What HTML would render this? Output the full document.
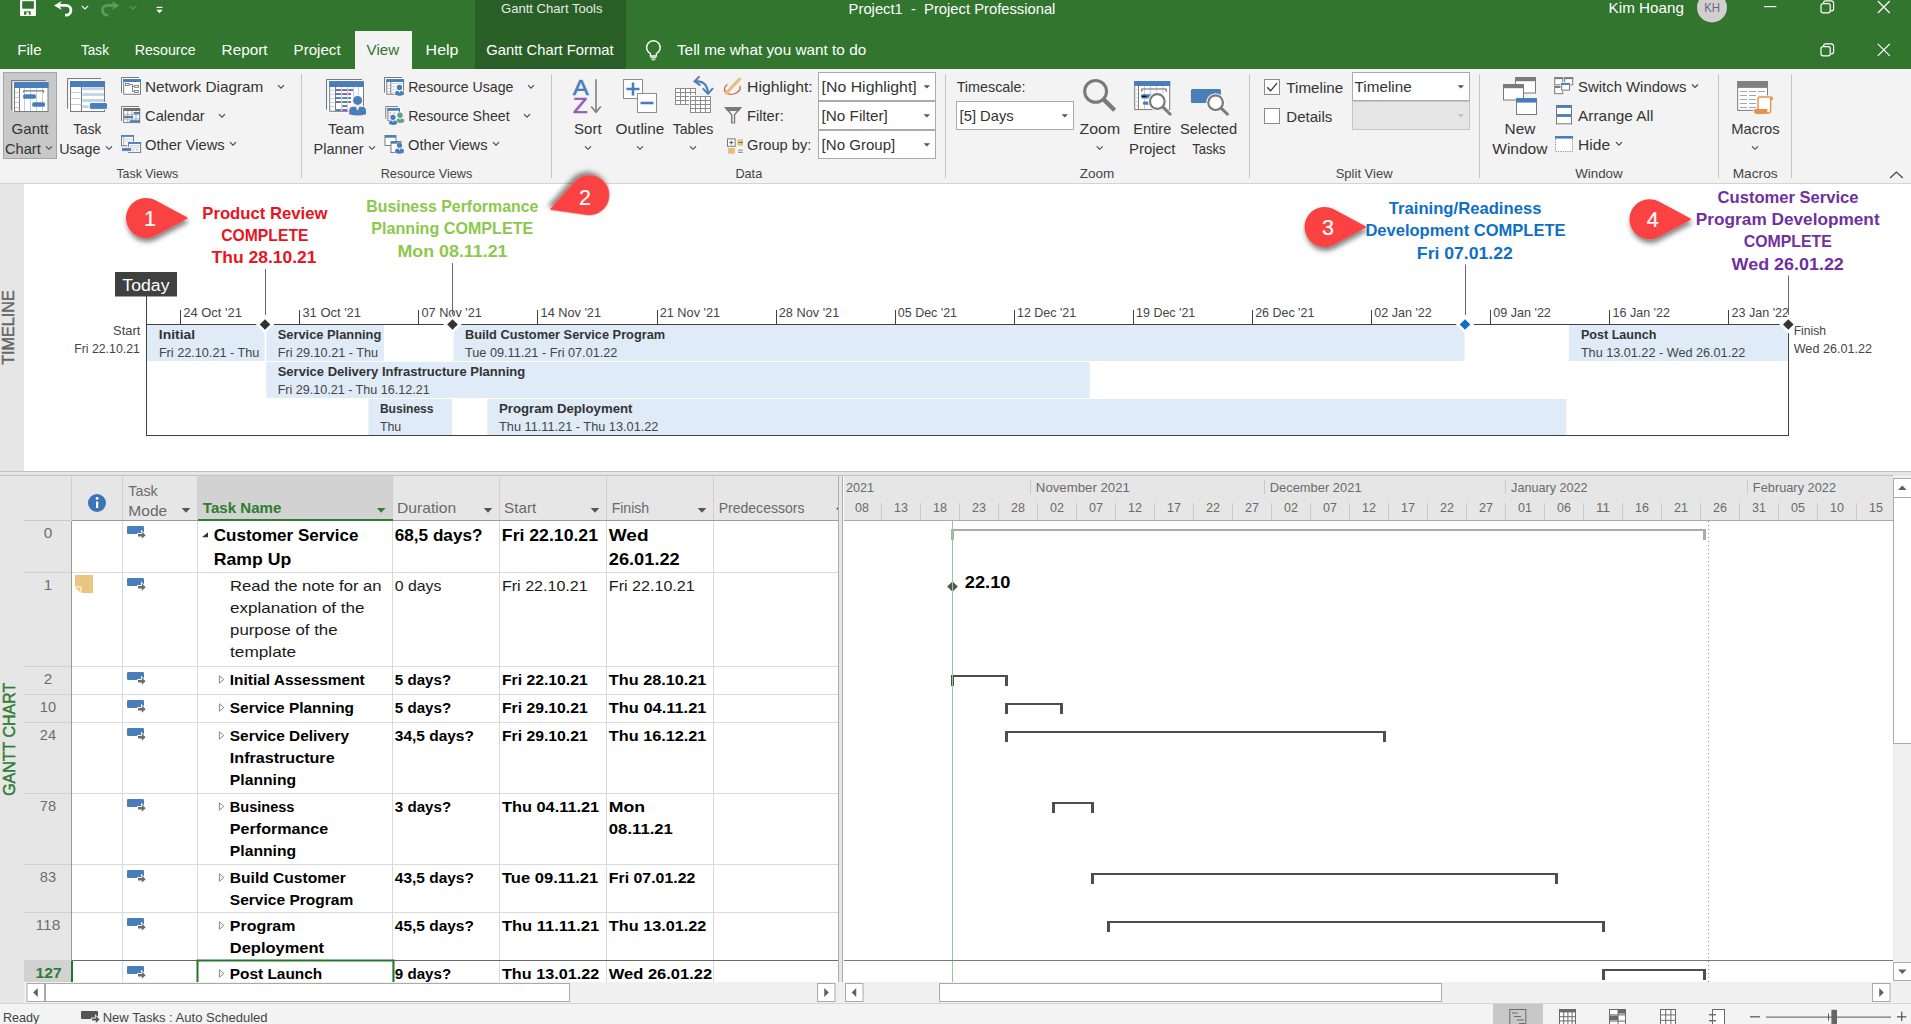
<!DOCTYPE html>
<html lang="en">
<head>
<meta charset="utf-8">
<title>Project1 - Project Professional</title>
<style>
html,body{margin:0;padding:0;background:#fff;}
body{width:1911px;height:1024px;overflow:hidden;font-family:"Liberation Sans",sans-serif;}
#app{position:relative;width:1911px;height:1024px;overflow:hidden;background:#fff;}
#app svg{position:absolute;left:0;top:0;display:block;font-family:"Liberation Sans",sans-serif;}
text{white-space:pre;}
</style>
</head>
<body>
<div id="app">
<svg width="1911" height="1024" viewBox="0 0 1911 1024">
<defs>
<filter id="ds" x="-30%" y="-30%" width="170%" height="180%"><feDropShadow dx="1" dy="3.6" stdDeviation="2.8" flood-color="#000" flood-opacity="0.5"/></filter>
</defs>

<g id="titlebar">
<rect x="0" y="0" width="1911" height="69" fill="#31752F"/>
<rect x="475" y="0" width="151" height="69" fill="#295E27"/>
<rect x="355" y="31" width="57" height="38" fill="#F3F3F3"/>
<rect x="20.1" y="-1" width="15.8" height="17" fill="#FFFFFF" rx="0.8"/>
<rect x="22.2" y="1.2" width="11.7" height="7.5" fill="#31752F"/>
<rect x="24.1" y="11.3" width="6.6" height="3.5" fill="#31752F"/>
<rect x="26.3" y="12.3" width="2.5" height="3.7" fill="#FFFFFF"/>
<path d="M54 5.4 L61.8 1 L59.2 5.4 L61.8 9.9 Z" fill="#FFFFFF"/>
<path d="M58.5 5.4 H66 A4.9 4.9 0 0 1 66 15.2 H65" fill="none" stroke="#FFFFFF" stroke-width="2.8"/>
<path d="M81.8 5.9 l3.2 3 l3.2 -3" fill="none" stroke="#FFFFFF" stroke-width="1.2"/>
<path d="M119.4 5.4 L111.6 1 L114.2 5.4 L111.6 9.9 Z" fill="#5F9C5C"/>
<path d="M114.9 5.4 H107.4 A4.9 4.9 0 0 0 107.4 15.2 H108.4" fill="none" stroke="#5F9C5C" stroke-width="2.8"/>
<path d="M129.8 5.9 l3.2 3 l3.2 -3" fill="none" stroke="#5F9C5C" stroke-width="1.2"/>
<rect x="156.6" y="6.8" width="5.8" height="1.2" fill="#FFFFFF"/>
<path d="M156.3 9.8 h6.4 l-3.2 3.4 z" fill="#FFFFFF"/>
<text x="500.98" y="12.7" font-size="13" fill="#E4EEE3" textLength="101.47" lengthAdjust="spacingAndGlyphs">Gantt Chart Tools</text>
<text x="848.64" y="14" font-size="14.4" fill="#FFFFFF" textLength="206.78" lengthAdjust="spacingAndGlyphs">Project1  -  Project Professional</text>
<text x="1608.64" y="12.6" font-size="14.4" fill="#FFFFFF" textLength="75.28" lengthAdjust="spacingAndGlyphs">Kim Hoang</text>
<circle cx="1712" cy="7.5" r="15" fill="#D2D0CE"/>
<text x="1704.19" y="11.8" font-size="12.5" fill="#6E6480" textLength="15.84" lengthAdjust="spacingAndGlyphs">KH</text>
<rect x="1764" y="6" width="12.4" height="1.2" fill="#FFFFFF"/>
<rect x="1821" y="3.6" width="9.2" height="9.2" fill="none" stroke="#FFFFFF" stroke-width="1.2" rx="2"/>
<path d="M1823.6 3.6 v-0.8 a2 2 0 0 1 2 -2 h5.6 a2.4 2.4 0 0 1 2.4 2.4 v5.6 a2 2 0 0 1 -2 2 h-0.8" fill="none" stroke="#FFFFFF" stroke-width="1.2"/>
<rect x="1821" y="46.6" width="9.2" height="9.2" fill="none" stroke="#FFFFFF" stroke-width="1.2" rx="2"/>
<path d="M1823.6 46.6 v-0.8 a2 2 0 0 1 2 -2 h5.6 a2.4 2.4 0 0 1 2.4 2.4 v5.6 a2 2 0 0 1 -2 2 h-0.8" fill="none" stroke="#FFFFFF" stroke-width="1.2"/>
<path d="M1877.8 1 l12 12 M1889.8 1 l-12 12" fill="none" stroke="#FFFFFF" stroke-width="1.2"/>
<path d="M1877.8 43.8 l12 12 M1889.8 43.8 l-12 12" fill="none" stroke="#FFFFFF" stroke-width="1.2"/>
<text x="17.34" y="54.8" font-size="14.4" fill="#FFFFFF" textLength="24.28" lengthAdjust="spacingAndGlyphs">File</text>
<text x="81.04" y="54.8" font-size="14.4" fill="#FFFFFF" textLength="27.88" lengthAdjust="spacingAndGlyphs">Task</text>
<text x="134.64" y="54.8" font-size="14.4" fill="#FFFFFF" textLength="60.98" lengthAdjust="spacingAndGlyphs">Resource</text>
<text x="221.64" y="54.8" font-size="14.4" fill="#FFFFFF" textLength="45.98" lengthAdjust="spacingAndGlyphs">Report</text>
<text x="293.64" y="54.8" font-size="14.4" fill="#FFFFFF" textLength="46.98" lengthAdjust="spacingAndGlyphs">Project</text>
<text x="366.64" y="54.8" font-size="14.4" fill="#31752F" textLength="32.58" lengthAdjust="spacingAndGlyphs">View</text>
<text x="425.64" y="54.8" font-size="14.4" fill="#FFFFFF" textLength="32.88" lengthAdjust="spacingAndGlyphs">Help</text>
<text x="486.24" y="54.8" font-size="14.4" fill="#FFFFFF" textLength="127.38" lengthAdjust="spacingAndGlyphs">Gantt Chart Format</text>
<path d="M650.4 53.6 A6.8 6.8 0 1 1 656.4 53.6 V56 H650.4 Z" fill="none" stroke="#FFFFFF" stroke-width="1.4"/>
<rect x="650.6" y="57.2" width="5.6" height="1.2" fill="#FFFFFF"/>
<rect x="651.6" y="59.2" width="3.6" height="1.1" fill="#FFFFFF"/>
<text x="676.94" y="54.8" font-size="14.4" fill="#FFFFFF" textLength="189.28" lengthAdjust="spacingAndGlyphs">Tell me what you want to do</text>
</g>
<g id="ribbon">
<rect x="0" y="69" width="1911" height="114" fill="#F3F3F3"/>
<rect x="0" y="183" width="1911" height="1" fill="#D4D4D4"/>
<rect x="3.5" y="72.5" width="53" height="86" fill="#C8C8C8" stroke="#A6A6A6" stroke-width="1"/>
<g transform="translate(0 0)">
<path d="M11.5 110 V80.5 H46" fill="none" stroke="#7A7A7A" stroke-width="1"/>
<rect x="13" y="81.6" width="35" height="30.2" fill="#fff"/>
<rect x="14.5" y="82.5" width="33.5" height="29" fill="#fff" stroke="#7A7A7A" stroke-width="1"/>
<rect x="14" y="82" width="34.5" height="6" fill="#4A7EBB"/>
<rect x="19" y="88" width="1" height="23" fill="#7A7A7A"/>
<rect x="24" y="88" width="1" height="23" fill="#BDD0E9"/>
<rect x="30" y="88" width="1" height="23" fill="#BDD0E9"/>
<rect x="36" y="88" width="1" height="23" fill="#BDD0E9"/>
<rect x="42" y="88" width="1" height="23" fill="#BDD0E9"/>
<rect x="15" y="92" width="4" height="1" fill="#BDD0E9"/>
<rect x="15" y="97" width="4" height="1" fill="#BDD0E9"/>
<rect x="15" y="102" width="4" height="1" fill="#BDD0E9"/>
<rect x="15" y="107" width="4" height="1" fill="#BDD0E9"/>
<path d="M23.7 92.8 V90.9 H43.6 V92.8" fill="none" stroke="#7A7A7A" stroke-width="1.1"/>
<rect x="23.1" y="94.2" width="12.8" height="4.6" fill="#4A7EBB" rx="1.6"/>
<rect x="32.2" y="102.2" width="12.8" height="4.6" fill="#4A7EBB" rx="1.6"/>
</g>
<text x="11.64" y="134" font-size="14.4" fill="#333333" textLength="36.78" lengthAdjust="spacingAndGlyphs">Gantt</text>
<text x="5.04" y="154" font-size="14.4" fill="#333333" textLength="35.68" lengthAdjust="spacingAndGlyphs">Chart</text>
<path d="M46 146.3 l3 3 l3 -3" fill="none" stroke="#444" stroke-width="1.1"/>
<g transform="translate(0 0)">
<path d="M67.5 108.6 V78.5 H101" fill="none" stroke="#7A7A7A" stroke-width="1"/>
<rect x="69" y="80" width="36" height="32" fill="#fff"/>
<rect x="70.5" y="81.5" width="34" height="30" fill="#fff" stroke="#7A7A7A" stroke-width="1"/>
<rect x="70" y="81" width="35" height="6" fill="#4A7EBB"/>
<rect x="81" y="87" width="1" height="24" fill="#7A7A7A"/>
<rect x="71" y="92" width="10" height="1" fill="#BDD0E9"/>
<rect x="71" y="98" width="10" height="1" fill="#BDD0E9"/>
<rect x="71" y="104" width="10" height="1" fill="#BDD0E9"/>
<rect x="82.3" y="87.3" width="21.7" height="2.9" fill="#C3D4E9"/>
<rect x="82.3" y="93.1" width="21.7" height="2.9" fill="#C3D4E9"/>
<rect x="82.3" y="99" width="21.7" height="2.9" fill="#C3D4E9"/>
<rect x="82.3" y="105.2" width="6.6" height="2.8" fill="#C3D4E9"/>
<rect x="89.4" y="102.5" width="18.2" height="6.9" fill="#4A7EBB" stroke="#fff" stroke-width="1" rx="2"/>
</g>
<text x="73.34" y="134" font-size="14.4" fill="#333333" textLength="27.88" lengthAdjust="spacingAndGlyphs">Task</text>
<text x="59.14" y="154" font-size="14.4" fill="#333333" textLength="41.28" lengthAdjust="spacingAndGlyphs">Usage</text>
<path d="M106 146.3 l3 3 l3 -3" fill="none" stroke="#444" stroke-width="1.1"/>
<g transform="translate(0 0)">
<path d="M121.5 92.9 V77.5 H139" fill="none" stroke="#7A7A7A" stroke-width="1"/>
<rect x="122.6" y="78.5" width="19" height="17" fill="#fff"/>
<rect x="123.7" y="79.6" width="16.8" height="14.7" fill="#fff" stroke="#7A7A7A" stroke-width="1"/>
<rect x="123.2" y="79.1" width="17.8" height="2.9" fill="#4A7EBB"/>
<rect x="125.5" y="83.5" width="3.6" height="2" fill="#fff" stroke="#7A7A7A" stroke-width="0.9"/>
<rect x="134.6" y="85.4" width="3.8" height="2" fill="#fff" stroke="#7A7A7A" stroke-width="0.9"/>
<rect x="134.6" y="90.5" width="3.8" height="2" fill="#fff" stroke="#7A7A7A" stroke-width="0.9"/>
<path d="M129.4 84.5 H132.5 V91.5 H134.3 M132.5 86.4 H134.3" fill="none" stroke="#7A7A7A" stroke-width="0.9"/>
</g>
<text x="145.04" y="92" font-size="14.4" fill="#333333" textLength="118.28" lengthAdjust="spacingAndGlyphs">Network Diagram</text>
<path d="M278 85.1 l3 3 l3 -3" fill="none" stroke="#444" stroke-width="1.1"/>
<g transform="translate(0 0)">
<path d="M121.5 121 V106.5 H139" fill="none" stroke="#7A7A7A" stroke-width="1"/>
<rect x="122.6" y="107.5" width="18.2" height="16" fill="#fff"/>
<rect x="123.7" y="108.6" width="16" height="14" fill="#fff" stroke="#7A7A7A" stroke-width="1"/>
<rect x="123.2" y="108.1" width="17" height="2.9" fill="#707070"/>
<rect x="127.4" y="111" width="0.8" height="11.4" fill="#9A9A9A"/>
<rect x="131.5" y="111" width="0.8" height="11.4" fill="#9A9A9A"/>
<rect x="135.6" y="111" width="0.8" height="11.4" fill="#9A9A9A"/>
<rect x="124" y="114.4" width="15.6" height="0.8" fill="#9A9A9A"/>
<rect x="124" y="118.6" width="15.6" height="0.8" fill="#9A9A9A"/>
<rect x="133.7" y="112" width="6.4" height="2" fill="#4A7EBB"/>
<rect x="123.8" y="116" width="9.4" height="2" fill="#4A7EBB"/>
<rect x="129.6" y="120.2" width="10.5" height="2" fill="#4A7EBB"/>
</g>
<text x="145.04" y="121" font-size="14.4" fill="#333333" textLength="59.68" lengthAdjust="spacingAndGlyphs">Calendar</text>
<path d="M219 114.1 l3 3 l3 -3" fill="none" stroke="#444" stroke-width="1.1"/>
<g transform="translate(0 0)">
<rect x="121.5" y="135.7" width="12" height="10" fill="#fff" stroke="#7A7A7A" stroke-width="1"/>
<rect x="121" y="135.2" width="13" height="1.6" fill="#4A7EBB"/>
<rect x="123.4" y="137" width="0.8" height="8" fill="#9A9A9A"/>
<rect x="125" y="138.6" width="7.6" height="1" fill="#BDD0E9"/>
<rect x="125" y="140.8" width="7.6" height="1" fill="#BDD0E9"/>
<rect x="127.4" y="141.4" width="14.4" height="12" fill="#F3F3F3"/>
<rect x="128.6" y="142.6" width="12" height="9.8" fill="#fff" stroke="#7A7A7A" stroke-width="1"/>
<rect x="128.1" y="142.1" width="13" height="1.8" fill="#4A7EBB"/>
<rect x="130.6" y="145.4" width="8" height="2" fill="none" stroke="#BDD0E9" stroke-width="0.9"/>
<rect x="132" y="149" width="2.6" height="1.6" fill="#BDD0E9"/>
<rect x="136" y="149" width="2.6" height="1.6" fill="#BDD0E9"/>
<rect x="121.4" y="147.6" width="10.2" height="3.8" fill="#4A7EBB" stroke="#F3F3F3" stroke-width="1" rx="1.4"/>
</g>
<text x="145.04" y="150" font-size="14.4" fill="#333333" textLength="79.68" lengthAdjust="spacingAndGlyphs">Other Views</text>
<path d="M230 142.1 l3 3 l3 -3" fill="none" stroke="#444" stroke-width="1.1"/>
<text x="116.39" y="177.7" font-size="12.6" fill="#444" textLength="61.74" lengthAdjust="spacingAndGlyphs">Task Views</text>
<rect x="301" y="74" width="1" height="104" fill="#C6C6C6"/>
<g transform="translate(0 0)">
<path d="M326.5 109.7 V79.5 H362" fill="none" stroke="#7A7A7A" stroke-width="1"/>
<rect x="328.4" y="80.4" width="36" height="32" fill="#fff"/>
<rect x="329.7" y="81.7" width="33.8" height="29.6" fill="#fff" stroke="#7A7A7A" stroke-width="1"/>
<rect x="329.2" y="81.2" width="34.8" height="5.8" fill="#4A7EBB"/>
<rect x="335" y="87" width="1" height="24" fill="#7A7A7A"/>
<rect x="341" y="87" width="1" height="24" fill="#BDD0E9"/>
<rect x="347" y="87" width="1" height="24" fill="#BDD0E9"/>
<rect x="353" y="87" width="1" height="10" fill="#BDD0E9"/>
<rect x="358" y="87" width="1" height="7.5" fill="#BDD0E9"/>
<rect x="330.5" y="89.8" width="4.1" height="1" fill="#BDD0E9"/>
<rect x="330.5" y="93.9" width="4.1" height="1" fill="#BDD0E9"/>
<rect x="330.5" y="98" width="4.1" height="1" fill="#BDD0E9"/>
<rect x="330.5" y="102" width="4.1" height="1" fill="#BDD0E9"/>
<rect x="330.5" y="106" width="4.1" height="1" fill="#BDD0E9"/>
<rect x="336" y="89.1" width="4.9" height="1.9" fill="#9150B5"/>
<rect x="342.2" y="89.1" width="4.8" height="1.9" fill="#707070"/>
<rect x="348.2" y="89.1" width="4.9" height="1.9" fill="#4A7EBB"/>
<rect x="336" y="93.1" width="4.9" height="1.9" fill="#4A7EBB"/>
<rect x="342.2" y="93.1" width="4.8" height="1.9" fill="#9150B5"/>
<rect x="348.2" y="93.1" width="2.8" height="1.9" fill="#9150B5"/>
<rect x="336" y="97.1" width="4.9" height="1.9" fill="#4A7EBB"/>
<rect x="342.2" y="97.1" width="4.8" height="1.9" fill="#4A7EBB"/>
<rect x="348.2" y="97.1" width="2.8" height="1.9" fill="#4A7EBB"/>
<rect x="336" y="101.1" width="4.9" height="1.9" fill="#707070"/>
<rect x="342.2" y="101.1" width="4.8" height="1.9" fill="#707070"/>
<rect x="348.2" y="101.1" width="2.8" height="1.9" fill="#707070"/>
<rect x="342.2" y="105.1" width="4.8" height="1.9" fill="#4A7EBB"/>
<rect x="336" y="109.1" width="4.9" height="1.9" fill="#4A7EBB"/>
<rect x="342.2" y="109.1" width="4.8" height="1.9" fill="#9150B5"/>
<path d="M349.2 114.2 L349.2 111 Q349.2 106.8 353.4 106.8 L361.8 106.8 Q366 106.8 366 111 L366 114.2 Q357.6 116.6 349.2 114.2 Z" fill="#4A7EBB" stroke="#F3F3F3" stroke-width="1.8" paint-order="stroke"/>
<circle cx="357.6" cy="100.4" r="4.5" fill="#4A7EBB" stroke="#F3F3F3" stroke-width="1.8" paint-order="stroke"/>
<path d="M355.58 106.6 h4.03 l-2.02 4.03 z" fill="#F3F3F3"/>
</g>
<text x="328.14" y="134" font-size="14.4" fill="#333333" textLength="36.18" lengthAdjust="spacingAndGlyphs">Team</text>
<text x="313.64" y="154" font-size="14.4" fill="#333333" textLength="49.88" lengthAdjust="spacingAndGlyphs">Planner</text>
<path d="M369 146.3 l3 3 l3 -3" fill="none" stroke="#444" stroke-width="1.1"/>
<g transform="translate(0 0)">
<path d="M384.5 92.6 V77.5 H402" fill="none" stroke="#7A7A7A" stroke-width="1"/>
<rect x="385.6" y="78.6" width="19" height="17" fill="#fff"/>
<rect x="386.8" y="79.7" width="16.8" height="14.6" fill="#fff" stroke="#7A7A7A" stroke-width="1"/>
<rect x="386.3" y="79.2" width="17.8" height="2.8" fill="#4A7EBB"/>
<rect x="390.3" y="82" width="1" height="12" fill="#7A7A7A"/>
<rect x="387.3" y="85" width="2.7" height="1" fill="#BDD0E9"/>
<rect x="387.3" y="88" width="2.7" height="1" fill="#BDD0E9"/>
<rect x="387.3" y="91" width="2.7" height="1" fill="#BDD0E9"/>
<rect x="391.5" y="83.2" width="11.5" height="1" fill="#BDD0E9"/>
<rect x="391.5" y="86.2" width="4" height="1" fill="#BDD0E9"/>
<rect x="391.5" y="89.3" width="4" height="1" fill="#BDD0E9"/>
<rect x="391.5" y="92.2" width="2.3" height="1" fill="#BDD0E9"/>
<path d="M395 94.6 L395 93.3 Q395 91 397.3 91 L401.7 91 Q404 91 404 93.3 L404 94.6 Q399.5 97 395 94.6 Z" fill="#4A7EBB" stroke="#F3F3F3" stroke-width="1.2" paint-order="stroke"/>
<circle cx="399.5" cy="87.4" r="2.7" fill="#4A7EBB" stroke="#F3F3F3" stroke-width="1.2" paint-order="stroke"/>
<path d="M398.42 90.8 h2.16 l-1.08 2.16 z" fill="#F3F3F3"/>
</g>
<text x="408.14" y="92" font-size="14.4" fill="#333333" textLength="105.28" lengthAdjust="spacingAndGlyphs">Resource Usage</text>
<path d="M528 85.1 l3 3 l3 -3" fill="none" stroke="#444" stroke-width="1.1"/>
<g transform="translate(0 0)">
<path d="M385.8 118.7 V106.6 H398" fill="none" stroke="#7A7A7A" stroke-width="1"/>
<rect x="386.8" y="107.6" width="14" height="14" fill="#fff"/>
<rect x="387.9" y="108.7" width="11.6" height="12" fill="#fff" stroke="#7A7A7A" stroke-width="1"/>
<rect x="387.4" y="108.2" width="12.6" height="2.6" fill="#4A7EBB"/>
<rect x="389.7" y="112.5" width="1" height="1" fill="#555"/>
<rect x="393.6" y="112.5" width="1" height="1" fill="#555"/>
<rect x="397.6" y="112.5" width="1" height="1" fill="#555"/>
<rect x="389.7" y="115.3" width="1" height="1" fill="#555"/>
<rect x="389.7" y="118.2" width="1" height="1" fill="#555"/>
<path d="M396.4 121.8 L396.4 120.8 Q396.4 118.6 398.6 118.6 L402 118.6 Q404.2 118.6 404.2 120.8 L404.2 121.8 Q400.3 124.2 396.4 121.8 Z" fill="#5FA08A" stroke="#F3F3F3" stroke-width="1.2" paint-order="stroke"/>
<circle cx="400" cy="115.2" r="2.7" fill="#5FA08A" stroke="#F3F3F3" stroke-width="1.2" paint-order="stroke"/>
<path d="M399.06 118.4 h1.87 l-0.94 1.87 z" fill="#F3F3F3"/>
<path d="M389 123.8 L389 122.8 Q389 120.6 391.2 120.6 L395 120.6 Q397.2 120.6 397.2 122.8 L397.2 123.8 Q393.1 126.2 389 123.8 Z" fill="#4A7EBB" stroke="#F3F3F3" stroke-width="1.2" paint-order="stroke"/>
<circle cx="393" cy="117.3" r="2.6" fill="#4A7EBB" stroke="#F3F3F3" stroke-width="1.2" paint-order="stroke"/>
<path d="M392.02 120.4 h1.97 l-0.98 1.97 z" fill="#F3F3F3"/>
</g>
<text x="408.14" y="121" font-size="14.4" fill="#333333" textLength="101.48" lengthAdjust="spacingAndGlyphs">Resource Sheet</text>
<path d="M524 114.1 l3 3 l3 -3" fill="none" stroke="#444" stroke-width="1.1"/>
<rect x="385" y="135.5" width="11" height="10" fill="#fff" stroke="#7E7E7E" stroke-width="1"/>
<rect x="385" y="135.5" width="11" height="2.2" fill="#4A7EBB"/>
<rect x="391" y="141.5" width="10" height="11" fill="#fff" stroke="#7E7E7E" stroke-width="1"/>
<rect x="391" y="141.5" width="10" height="2.2" fill="#4A7EBB"/>
<path d="M395.13 152.47 L395.13 150.72 Q395.13 148.81 397.03 148.81 L401.97 148.81 Q403.87 148.81 403.87 150.72 L403.87 152.47 Q399.5 154.87 395.13 152.47 Z" fill="#4A7EBB" stroke="#F3F3F3" stroke-width="1" paint-order="stroke"/>
<circle cx="399.5" cy="145.3" r="2.56" fill="#4A7EBB" stroke="#F3F3F3" stroke-width="1" paint-order="stroke"/>
<path d="M398.45 148.62 h2.1 l-1.05 2.1 z" fill="#F3F3F3"/>
<text x="408.14" y="150" font-size="14.4" fill="#333333" textLength="79.38" lengthAdjust="spacingAndGlyphs">Other Views</text>
<path d="M493 142.1 l3 3 l3 -3" fill="none" stroke="#444" stroke-width="1.1"/>
<text x="380.69" y="177.7" font-size="12.6" fill="#444" textLength="91.64" lengthAdjust="spacingAndGlyphs">Resource Views</text>
<rect x="551" y="74" width="1" height="104" fill="#C6C6C6"/>
<g transform="translate(0 0)">
<text x="572.86" y="94.7" font-size="21.6" fill="#4A7EBB" textLength="16.02" lengthAdjust="spacingAndGlyphs" stroke="#4A7EBB" stroke-width="0.55">A</text>
<text x="573.06" y="112.8" font-size="21.6" fill="#9B59B6" textLength="14.62" lengthAdjust="spacingAndGlyphs" stroke="#9B59B6" stroke-width="0.55">Z</text>
<path d="M596 79.2 V112 M591.2 106.6 L596 112.2 L600.8 106.6" fill="none" stroke="#808080" stroke-width="1.6"/>
</g>
<text x="574.04" y="134" font-size="14.4" fill="#333333" textLength="27.68" lengthAdjust="spacingAndGlyphs">Sort</text>
<path d="M585 146.3 l3 3 l3 -3" fill="none" stroke="#444" stroke-width="1.1"/>
<rect x="623.5" y="79.5" width="19" height="19" fill="#fff" stroke="#8C8C8C" stroke-width="1"/>
<path d="M626.5 89 h13 M633 82.5 v13" fill="none" stroke="#4A7EBB" stroke-width="2.6"/>
<rect x="637.5" y="93.5" width="19" height="19" fill="#fff" stroke="#8C8C8C" stroke-width="1"/>
<path d="M640.5 103 h13" fill="none" stroke="#4A7EBB" stroke-width="2.6"/>
<text x="615.64" y="134" font-size="14.4" fill="#333333" textLength="48.68" lengthAdjust="spacingAndGlyphs">Outline</text>
<path d="M637 146.3 l3 3 l3 -3" fill="none" stroke="#444" stroke-width="1.1"/>
<g transform="translate(0 0)">
<rect x="675.5" y="88.5" width="20" height="16" fill="#fff" stroke="#8C8C8C" stroke-width="1"/>
<rect x="680" y="88" width="1" height="16" fill="#8C8C8C"/>
<rect x="685" y="88" width="1" height="16" fill="#8C8C8C"/>
<rect x="690" y="88" width="1" height="16" fill="#8C8C8C"/>
<rect x="675" y="92" width="20" height="1" fill="#8C8C8C"/>
<rect x="675" y="96" width="20" height="1" fill="#8C8C8C"/>
<rect x="675" y="100" width="20" height="1" fill="#8C8C8C"/>
<rect x="689" y="95" width="22.5" height="18" fill="#F3F3F3"/>
<rect x="690.5" y="96.5" width="20" height="16" fill="#fff" stroke="#8C8C8C" stroke-width="1"/>
<rect x="695" y="96" width="1" height="16" fill="#8C8C8C"/>
<rect x="700" y="96" width="1" height="16" fill="#8C8C8C"/>
<rect x="705" y="96" width="1" height="16" fill="#8C8C8C"/>
<rect x="690" y="100" width="20" height="1" fill="#8C8C8C"/>
<rect x="690" y="104" width="20" height="1" fill="#8C8C8C"/>
<rect x="690" y="108" width="20" height="1" fill="#8C8C8C"/>
<path d="M695.6 81.4 Q706.6 80.4 708 92.4" fill="none" stroke="#4A7EBB" stroke-width="2"/>
<path d="M699.6 76.4 L694.6 81.4 L700.4 85.4" fill="none" stroke="#4A7EBB" stroke-width="2"/>
<path d="M702.8 88.4 L708 93.8 L713 88.2" fill="none" stroke="#4A7EBB" stroke-width="2"/>
</g>
<text x="672.64" y="134" font-size="14.4" fill="#333333" textLength="40.78" lengthAdjust="spacingAndGlyphs">Tables</text>
<path d="M690 146.3 l3 3 l3 -3" fill="none" stroke="#444" stroke-width="1.1"/>
<g transform="translate(0 0)">
<path d="M727.4 84.6 A8 5.6 -12 1 0 739.8 85.8" fill="none" stroke="#D9553B" stroke-width="1.2"/>
<path d="M726.4 93 L739.6 79.2" fill="none" stroke="#E8BE7C" stroke-width="3.2" stroke-linecap="round"/>
<path d="M725 94.4 l2.6 -0.8 l-1.8 -1.8 z" fill="#E8BE7C"/>
</g>
<text x="747.04" y="92" font-size="14.4" fill="#333333" textLength="65.68" lengthAdjust="spacingAndGlyphs">Highlight:</text>
<g transform="translate(0 0)">
<path d="M724 107 H742.2 L735.2 115 V123.6 H731 V115 Z" fill="#7A7A7A"/>
<path d="M729.4 111 H736.8 L733.8 114.6 V122.4 H732.4 V114.6 Z" fill="#F3F3F3"/>
<path d="M724.6 107 H741.6 L739.6 110.6 H726.6 Z" fill="#7A7A7A"/>
</g>
<text x="747.04" y="121" font-size="14.4" fill="#333333" textLength="36.68" lengthAdjust="spacingAndGlyphs">Filter:</text>
<g transform="translate(0 0)">
<rect x="727.5" y="138.9" width="7.6" height="7.4" fill="#fff" stroke="#7A7A7A" stroke-width="1"/>
<path d="M729.3 142.6 h4 M731.3 140.6 v4" fill="none" stroke="#444" stroke-width="0.9"/>
<rect x="737.4" y="139.4" width="5.6" height="6.2" fill="#E8BE7C"/>
<rect x="738.4" y="142" width="4.6" height="0.9" fill="#666"/>
<rect x="728" y="148" width="6.8" height="5.7" fill="#E8BE7C"/>
<rect x="737" y="148" width="6.4" height="5.7" fill="#fff"/>
<rect x="738" y="149.6" width="5" height="0.9" fill="#666"/>
<rect x="738" y="151.8" width="5" height="0.9" fill="#666"/>
</g>
<text x="747.04" y="150" font-size="14.4" fill="#333333" textLength="64.38" lengthAdjust="spacingAndGlyphs">Group by:</text>
<rect x="818.5" y="72.5" width="117" height="28" fill="#fff" stroke="#ABABAB" stroke-width="1"/>
<path d="M923.6 85.2 h6.4 l-3.2 3.4 z" fill="#555"/>
<text x="821.64" y="92" font-size="14.4" fill="#333333" textLength="95.08" lengthAdjust="spacingAndGlyphs">[No Highlight]</text>
<rect x="818.5" y="101.5" width="117" height="28" fill="#fff" stroke="#ABABAB" stroke-width="1"/>
<path d="M923.6 114.2 h6.4 l-3.2 3.4 z" fill="#555"/>
<text x="821.64" y="121" font-size="14.4" fill="#333333" textLength="66.08" lengthAdjust="spacingAndGlyphs">[No Filter]</text>
<rect x="818.5" y="130.5" width="117" height="28" fill="#fff" stroke="#ABABAB" stroke-width="1"/>
<path d="M923.6 143.2 h6.4 l-3.2 3.4 z" fill="#555"/>
<text x="821.64" y="150" font-size="14.4" fill="#333333" textLength="73.58" lengthAdjust="spacingAndGlyphs">[No Group]</text>
<text x="735.38" y="177.7" font-size="12.6" fill="#444" textLength="26.84" lengthAdjust="spacingAndGlyphs">Data</text>
<rect x="945" y="74" width="1" height="104" fill="#C6C6C6"/>
<text x="956.64" y="92" font-size="14.4" fill="#333333" textLength="68.88" lengthAdjust="spacingAndGlyphs">Timescale:</text>
<rect x="956.5" y="101.5" width="117" height="28" fill="#fff" stroke="#ABABAB" stroke-width="1"/>
<path d="M1061.6 114.2 h6.4 l-3.2 3.4 z" fill="#555"/>
<text x="959.64" y="121" font-size="14.4" fill="#333333" textLength="54.08" lengthAdjust="spacingAndGlyphs">[5] Days</text>
<g transform="translate(0 0)">
<path d="M1103.31 99.11 L1114.6 110.2" fill="none" stroke="#7A7A7A" stroke-width="4.4"/>
<circle cx="1095.6" cy="91.4" r="10.9" fill="#F3F3F3" stroke="#7A7A7A" stroke-width="3.1"/>
</g>
<text x="1079.64" y="134" font-size="14.4" fill="#333333" textLength="40.48" lengthAdjust="spacingAndGlyphs">Zoom</text>
<path d="M1096.7 146.3 l3 3 l3 -3" fill="none" stroke="#444" stroke-width="1.1"/>
<g transform="translate(0 0)">
<rect x="1134.7" y="81.6" width="35" height="28" fill="#fff" stroke="#7A7A7A" stroke-width="1"/>
<rect x="1134.2" y="81.1" width="36" height="4.9" fill="#4A7EBB"/>
<rect x="1138" y="86" width="1" height="23.6" fill="#7A7A7A"/>
<rect x="1144" y="86" width="1" height="23" fill="#BDD0E9"/>
<rect x="1150" y="86" width="1" height="23" fill="#BDD0E9"/>
<rect x="1156" y="86" width="1" height="23" fill="#BDD0E9"/>
<rect x="1162.5" y="86" width="1" height="23" fill="#BDD0E9"/>
<rect x="1135.4" y="89.4" width="2.6" height="1" fill="#BDD0E9"/>
<rect x="1135.4" y="93.4" width="2.6" height="1" fill="#BDD0E9"/>
<rect x="1135.4" y="97.2" width="2.6" height="1" fill="#BDD0E9"/>
<rect x="1135.4" y="101" width="2.6" height="1" fill="#BDD0E9"/>
<rect x="1135.4" y="105" width="2.6" height="1" fill="#BDD0E9"/>
<path d="M1141.8 91.8 V89 H1166.2 V91.8" fill="none" stroke="#666" stroke-width="1.1"/>
<rect x="1141.3" y="94.2" width="11" height="4.3" fill="#4A7EBB" rx="1"/>
<rect x="1141.6" y="95.7" width="5" height="1.4" fill="#111"/>
<rect x="1143" y="101.4" width="8" height="3.4" fill="#4A7EBB" rx="1"/>
<circle cx="1157.3" cy="101.5" r="9.4" fill="#fff"/>
<path d="M1162.46 106.66 L1171 115" fill="none" stroke="#F3F3F3" stroke-width="4.9"/>
<path d="M1162.46 106.66 L1171 115" fill="none" stroke="#7A7A7A" stroke-width="2.9"/>
<circle cx="1157.3" cy="101.5" r="7.3" fill="#fff" stroke="#7A7A7A" stroke-width="2.2"/>
</g>
<text x="1133.34" y="134" font-size="14.4" fill="#333333" textLength="37.88" lengthAdjust="spacingAndGlyphs">Entire</text>
<text x="1129.14" y="154" font-size="14.4" fill="#333333" textLength="46.28" lengthAdjust="spacingAndGlyphs">Project</text>
<g transform="translate(0 0)">
<rect x="1190.9" y="88.9" width="30" height="14.1" fill="#4A7EBB" rx="1.6"/>
<circle cx="1215.6" cy="102.7" r="9.45" fill="#fff"/>
<path d="M1220.8 107.9 L1228.3 115" fill="none" stroke="#F3F3F3" stroke-width="4.9"/>
<path d="M1220.8 107.9 L1228.3 115" fill="none" stroke="#7A7A7A" stroke-width="2.9"/>
<circle cx="1215.6" cy="102.7" r="7.35" fill="#fff" stroke="#7A7A7A" stroke-width="2.2"/>
</g>
<text x="1180.04" y="134" font-size="14.4" fill="#333333" textLength="57.18" lengthAdjust="spacingAndGlyphs">Selected</text>
<text x="1192.24" y="154" font-size="14.4" fill="#333333" textLength="33.28" lengthAdjust="spacingAndGlyphs">Tasks</text>
<text x="1079.68" y="177.7" font-size="12.6" fill="#444" textLength="34.54" lengthAdjust="spacingAndGlyphs">Zoom</text>
<rect x="1249" y="74" width="1" height="104" fill="#C6C6C6"/>
<rect x="1264.5" y="79.5" width="15" height="15" fill="#fff" stroke="#8A8A8A" stroke-width="1"/>
<path d="M1267.2 87.2 l3.4 3.6 l6.4 -7.6" fill="none" stroke="#333" stroke-width="1.3"/>
<text x="1286.34" y="92.6" font-size="14.4" fill="#333333" textLength="56.88" lengthAdjust="spacingAndGlyphs">Timeline</text>
<rect x="1264.5" y="108.5" width="15" height="15" fill="#fff" stroke="#8A8A8A" stroke-width="1"/>
<text x="1286.34" y="121.6" font-size="14.4" fill="#333333" textLength="45.98" lengthAdjust="spacingAndGlyphs">Details</text>
<rect x="1352.5" y="72.5" width="117" height="28" fill="#fff" stroke="#ABABAB" stroke-width="1"/>
<path d="M1457.6 85.2 h6.4 l-3.2 3.4 z" fill="#555"/>
<text x="1354.64" y="92" font-size="14.4" fill="#333333" textLength="57.08" lengthAdjust="spacingAndGlyphs">Timeline</text>
<rect x="1352.5" y="101.5" width="117" height="28" fill="#E6E6E6" stroke="#C6C6C6" stroke-width="1"/>
<path d="M1457.6 114.2 h6.4 l-3.2 3.4 z" fill="#C0C0C0"/>
<text x="1335.68" y="177.7" font-size="12.6" fill="#444" textLength="56.95" lengthAdjust="spacingAndGlyphs">Split View</text>
<rect x="1479" y="74" width="1" height="104" fill="#C6C6C6"/>
<rect x="1515.5" y="77.5" width="20" height="15.5" fill="#fff" stroke="#7A7A7A" stroke-width="1"/>
<rect x="1515" y="77" width="21" height="4.2" fill="#7A7A7A"/>
<rect x="1503.5" y="84.5" width="20" height="15.5" fill="#fff" stroke="#7A7A7A" stroke-width="1"/>
<rect x="1503" y="84" width="21" height="4.2" fill="#7A7A7A"/>
<rect x="1516.5" y="98.5" width="20" height="16" fill="#fff" stroke="#7A7A7A" stroke-width="1"/>
<rect x="1516" y="98" width="21" height="4.6" fill="#4A7EBB"/>
<text x="1504.64" y="134" font-size="14.4" fill="#333333" textLength="30.88" lengthAdjust="spacingAndGlyphs">New</text>
<text x="1492.24" y="154" font-size="14.4" fill="#333333" textLength="55.18" lengthAdjust="spacingAndGlyphs">Window</text>
<g transform="translate(0 0)">
<rect x="1554.7" y="77.8" width="8" height="7" fill="#fff" stroke="#7A7A7A" stroke-width="1"/>
<rect x="1554.2" y="77.3" width="9" height="1.8" fill="#7A7A7A"/>
<rect x="1564.7" y="77.8" width="8" height="7" fill="#fff" stroke="#7A7A7A" stroke-width="1"/>
<rect x="1564.2" y="77.3" width="9" height="1.8" fill="#7A7A7A"/>
<rect x="1554.7" y="86.7" width="8" height="7" fill="#fff" stroke="#7A7A7A" stroke-width="1"/>
<rect x="1554.2" y="86.2" width="9" height="1.8" fill="#7A7A7A"/>
<rect x="1560.4" y="82.2" width="10.2" height="9.2" fill="#F3F3F3"/>
<rect x="1561.7" y="83.5" width="7.8" height="6.6" fill="#fff" stroke="#7A7A7A" stroke-width="1"/>
<rect x="1561.2" y="83" width="8.8" height="1.9" fill="#4A7EBB"/>
</g>
<text x="1578.14" y="92" font-size="14.4" fill="#333333" textLength="108.28" lengthAdjust="spacingAndGlyphs">Switch Windows</text>
<path d="M1692 84.5 l3 3 l3 -3" fill="none" stroke="#444" stroke-width="1.1"/>
<rect x="1556.5" y="105.6" width="15" height="18.2" fill="#fff" stroke="#7A7A7A" stroke-width="1"/>
<rect x="1556" y="105.1" width="16" height="2.8" fill="#4A7EBB"/>
<rect x="1556" y="114.1" width="16" height="2.8" fill="#4A7EBB"/>
<text x="1578.14" y="121" font-size="14.4" fill="#333333" textLength="75.18" lengthAdjust="spacingAndGlyphs">Arrange All</text>
<rect x="1555.5" y="136.5" width="17" height="15" fill="#fff" stroke="#7A7A7A" stroke-width="1" stroke-dasharray="1 1.4"/>
<rect x="1555" y="136" width="18" height="2.6" fill="#4A7EBB"/>
<text x="1578.14" y="150" font-size="14.4" fill="#333333" textLength="31.98" lengthAdjust="spacingAndGlyphs">Hide</text>
<path d="M1616 142.1 l3 3 l3 -3" fill="none" stroke="#444" stroke-width="1.1"/>
<text x="1575.18" y="177.7" font-size="12.6" fill="#444" textLength="47.45" lengthAdjust="spacingAndGlyphs">Window</text>
<rect x="1718" y="74" width="1" height="104" fill="#C6C6C6"/>
<g transform="translate(0 0)">
<rect x="1737.7" y="81.6" width="29.8" height="28.8" fill="#fff" stroke="#7A7A7A" stroke-width="1"/>
<rect x="1737.2" y="81.1" width="30.8" height="6.8" fill="#808080"/>
<rect x="1740" y="91" width="7" height="1" fill="#A6A6A6"/>
<rect x="1749" y="91" width="7" height="1" fill="#A6A6A6"/>
<rect x="1740" y="95" width="7" height="1" fill="#A6A6A6"/>
<rect x="1749" y="95" width="7" height="1" fill="#A6A6A6"/>
<rect x="1740" y="99" width="7" height="1" fill="#A6A6A6"/>
<rect x="1749" y="99" width="7" height="1" fill="#A6A6A6"/>
<rect x="1740" y="103" width="7" height="1" fill="#A6A6A6"/>
<rect x="1749" y="103" width="7" height="1" fill="#A6A6A6"/>
<rect x="1740" y="107" width="7" height="1" fill="#A6A6A6"/>
<rect x="1749" y="107" width="7" height="1" fill="#A6A6A6"/>
<rect x="1758" y="91" width="7" height="1" fill="#A6A6A6"/>
<path d="M1758.1 109.6 V98.6 Q1758.1 97 1759.8 97 H1769.2 Q1770.6 97 1770.6 98.6 V110.8 Q1770.6 113 1768.4 113 H1766.6 V109.6 Z" fill="#fff" stroke="#F3F3F3" stroke-width="3.4"/>
<path d="M1756.4 109 H1767 V113.7 H1756.4 Q1754.1 113.7 1754.1 111.35 Q1754.1 109 1756.4 109 Z" fill="#E8914A" stroke="#F3F3F3" stroke-width="2" paint-order="stroke"/>
<path d="M1758.1 109.6 V98.6 Q1758.1 97 1759.8 97 H1769.2 Q1770.6 97 1770.6 98.6 V110.8 Q1770.6 113 1768.4 113 H1766.6 V109.6 Z" fill="#fff" stroke="#E8914A" stroke-width="1.4"/>
<path d="M1770.4 96.6 H1771.4 Q1772.9 96.8 1772.9 98.4 V100 H1770.4 Z" fill="#E8914A"/>
<path d="M1756.4 109 H1767 V113.7 H1756.4 Q1754.1 113.7 1754.1 111.35 Q1754.1 109 1756.4 109 Z" fill="#E8914A"/>
</g>
<text x="1731.24" y="134" font-size="14.4" fill="#333333" textLength="48.48" lengthAdjust="spacingAndGlyphs">Macros</text>
<path d="M1752 146.3 l3 3 l3 -3" fill="none" stroke="#444" stroke-width="1.1"/>
<text x="1732.68" y="177.7" font-size="12.6" fill="#444" textLength="44.95" lengthAdjust="spacingAndGlyphs">Macros</text>
<rect x="1791" y="74" width="1" height="104" fill="#C6C6C6"/>
<path d="M1890 178 l6.4 -6 l6.4 6" fill="none" stroke="#444" stroke-width="1.2"/>
</g>
<g id="timeline">
<rect x="0" y="184" width="1911" height="287" fill="#fff"/>
<rect x="0" y="184" width="24" height="840" fill="#E6E6E6"/>
<text transform="translate(14.2 364.8) rotate(-90)" font-size="17" fill="#666" stroke="#666" stroke-width="0.45" textLength="74.5" lengthAdjust="spacingAndGlyphs">TIMELINE</text>
<rect x="147" y="325" width="117.6" height="36" fill="#DFEBF7"/>
<rect x="266.3" y="325" width="117.6" height="36" fill="#DFEBF7"/>
<rect x="453.6" y="325" width="1011" height="36" fill="#DFEBF7"/>
<rect x="1569" y="325" width="218.7" height="36" fill="#DFEBF7"/>
<rect x="266.3" y="362" width="823.5" height="36" fill="#DFEBF7"/>
<rect x="368.4" y="399" width="83.6" height="36" fill="#DFEBF7"/>
<rect x="487.3" y="399" width="1079.2" height="36" fill="#DFEBF7"/>
<rect x="146" y="324" width="1643" height="1" fill="#404040"/>
<rect x="146" y="296" width="1" height="140" fill="#404040"/>
<rect x="1788" y="324" width="1" height="112" fill="#404040"/>
<rect x="146" y="435" width="1643" height="1" fill="#404040"/>
<rect x="180" y="310" width="1" height="14" fill="#404040"/>
<text x="183.28" y="316.6" font-size="13" fill="#444" textLength="58.68" lengthAdjust="spacingAndGlyphs">24 Oct '21</text>
<rect x="299" y="310" width="1" height="14" fill="#404040"/>
<text x="302.38" y="316.6" font-size="13" fill="#444" textLength="58.67" lengthAdjust="spacingAndGlyphs">31 Oct '21</text>
<rect x="418" y="310" width="1" height="14" fill="#404040"/>
<text x="421.47" y="316.6" font-size="13" fill="#444" textLength="60.48" lengthAdjust="spacingAndGlyphs">07 Nov '21</text>
<rect x="537" y="310" width="1" height="14" fill="#404040"/>
<text x="540.57" y="316.6" font-size="13" fill="#444" textLength="60.48" lengthAdjust="spacingAndGlyphs">14 Nov '21</text>
<rect x="657" y="310" width="1" height="14" fill="#404040"/>
<text x="659.67" y="316.6" font-size="13" fill="#444" textLength="60.48" lengthAdjust="spacingAndGlyphs">21 Nov '21</text>
<rect x="776" y="310" width="1" height="14" fill="#404040"/>
<text x="778.77" y="316.6" font-size="13" fill="#444" textLength="60.48" lengthAdjust="spacingAndGlyphs">28 Nov '21</text>
<rect x="895" y="310" width="1" height="14" fill="#404040"/>
<text x="897.87" y="316.6" font-size="13" fill="#444" textLength="59.18" lengthAdjust="spacingAndGlyphs">05 Dec '21</text>
<rect x="1014" y="310" width="1" height="14" fill="#404040"/>
<text x="1016.97" y="316.6" font-size="13" fill="#444" textLength="59.18" lengthAdjust="spacingAndGlyphs">12 Dec '21</text>
<rect x="1133" y="310" width="1" height="14" fill="#404040"/>
<text x="1136.07" y="316.6" font-size="13" fill="#444" textLength="59.18" lengthAdjust="spacingAndGlyphs">19 Dec '21</text>
<rect x="1252" y="310" width="1" height="14" fill="#404040"/>
<text x="1255.17" y="316.6" font-size="13" fill="#444" textLength="59.18" lengthAdjust="spacingAndGlyphs">26 Dec '21</text>
<rect x="1371" y="310" width="1" height="14" fill="#404040"/>
<text x="1374.27" y="316.6" font-size="13" fill="#444" textLength="57.48" lengthAdjust="spacingAndGlyphs">02 Jan '22</text>
<rect x="1490" y="310" width="1" height="14" fill="#404040"/>
<text x="1493.37" y="316.6" font-size="13" fill="#444" textLength="57.48" lengthAdjust="spacingAndGlyphs">09 Jan '22</text>
<rect x="1609" y="310" width="1" height="14" fill="#404040"/>
<text x="1612.47" y="316.6" font-size="13" fill="#444" textLength="57.48" lengthAdjust="spacingAndGlyphs">16 Jan '22</text>
<rect x="1728" y="310" width="1" height="14" fill="#404040"/>
<text x="1731.57" y="316.6" font-size="13" fill="#444" textLength="57.48" lengthAdjust="spacingAndGlyphs">23 Jan '22</text>
<rect x="115" y="272" width="62" height="24.5" fill="#404040"/>
<text x="122.36" y="291.3" font-size="17.4" fill="#fff" textLength="47.1" lengthAdjust="spacingAndGlyphs">Today</text>
<text x="113.08" y="334.6" font-size="13" fill="#444" textLength="27.17" lengthAdjust="spacingAndGlyphs">Start</text>
<text x="74.17" y="352.8" font-size="13" fill="#444" textLength="65.67" lengthAdjust="spacingAndGlyphs">Fri 22.10.21</text>
<text x="1793.67" y="335" font-size="13" fill="#444" textLength="32.48" lengthAdjust="spacingAndGlyphs">Finish</text>
<text x="1793.67" y="353" font-size="13" fill="#444" textLength="78.47" lengthAdjust="spacingAndGlyphs">Wed 26.01.22</text>
<text x="158.88" y="338.6" font-size="13" fill="#333" font-weight="700" textLength="36.28" lengthAdjust="spacingAndGlyphs">Initial</text>
<text x="158.88" y="356.8" font-size="13" fill="#444" textLength="100.47" lengthAdjust="spacingAndGlyphs">Fri 22.10.21 - Thu</text>
<text x="277.68" y="338.6" font-size="13" fill="#333" font-weight="700" textLength="103.67" lengthAdjust="spacingAndGlyphs">Service Planning</text>
<text x="277.68" y="356.8" font-size="13" fill="#444" textLength="100.47" lengthAdjust="spacingAndGlyphs">Fri 29.10.21 - Thu</text>
<text x="464.98" y="338.6" font-size="13" fill="#333" font-weight="700" textLength="200.17" lengthAdjust="spacingAndGlyphs">Build Customer Service Program</text>
<text x="464.98" y="356.8" font-size="13" fill="#444" textLength="152.47" lengthAdjust="spacingAndGlyphs">Tue 09.11.21 - Fri 07.01.22</text>
<text x="1580.88" y="338.6" font-size="13" fill="#333" font-weight="700" textLength="75.57" lengthAdjust="spacingAndGlyphs">Post Launch</text>
<text x="1580.88" y="356.8" font-size="13" fill="#444" textLength="164.38" lengthAdjust="spacingAndGlyphs">Thu 13.01.22 - Wed 26.01.22</text>
<text x="277.68" y="375.6" font-size="13" fill="#333" font-weight="700" textLength="247.58" lengthAdjust="spacingAndGlyphs">Service Delivery Infrastructure Planning</text>
<text x="277.68" y="393.8" font-size="13" fill="#444" textLength="151.97" lengthAdjust="spacingAndGlyphs">Fri 29.10.21 - Thu 16.12.21</text>
<text x="379.88" y="412.6" font-size="13" fill="#333" font-weight="700" textLength="53.67" lengthAdjust="spacingAndGlyphs">Business</text>
<text x="379.88" y="430.8" font-size="13" fill="#444" textLength="21.37" lengthAdjust="spacingAndGlyphs">Thu</text>
<text x="499.07" y="412.6" font-size="13" fill="#333" font-weight="700" textLength="133.37" lengthAdjust="spacingAndGlyphs">Program Deployment</text>
<text x="499.07" y="430.8" font-size="13" fill="#444" textLength="159.37" lengthAdjust="spacingAndGlyphs">Thu 11.11.21 - Thu 13.01.22</text>
<rect x="265" y="269" width="1" height="46" fill="#6A6A6A"/>
<path d="M265 315.5 l9 9 l-9 9 l-9 -9 z" fill="#fff"/>
<path d="M265 319.2 l5.3 5.3 l-5.3 5.3 l-5.3 -5.3 z" fill="#333"/>
<rect x="452" y="263" width="1" height="52" fill="#6A6A6A"/>
<path d="M452.5 315.5 l9 9 l-9 9 l-9 -9 z" fill="#fff"/>
<path d="M452.5 319.2 l5.3 5.3 l-5.3 5.3 l-5.3 -5.3 z" fill="#333"/>
<rect x="1465" y="264.5" width="1" height="50.5" fill="#6A6A6A"/>
<path d="M1465 315.5 l9 9 l-9 9 l-9 -9 z" fill="#fff"/>
<path d="M1465 319.2 l5.3 5.3 l-5.3 5.3 l-5.3 -5.3 z" fill="#0F6FC6"/>
<rect x="1788" y="275.5" width="1" height="39.5" fill="#6A6A6A"/>
<path d="M1788.3 315.5 l9 9 l-9 9 l-9 -9 z" fill="#fff"/>
<path d="M1788.3 319.2 l5.3 5.3 l-5.3 5.3 l-5.3 -5.3 z" fill="#333"/>
<text x="202.28" y="218.9" font-size="16.6" fill="#E8141E" font-weight="700" textLength="125.15" lengthAdjust="spacingAndGlyphs">Product Review</text>
<text x="221.19" y="240.9" font-size="16.6" fill="#E8141E" font-weight="700" textLength="87.34" lengthAdjust="spacingAndGlyphs">COMPLETE</text>
<text x="211.59" y="263.4" font-size="16.6" fill="#E8141E" font-weight="700" textLength="104.94" lengthAdjust="spacingAndGlyphs">Thu 28.10.21</text>
<text x="366.28" y="211.8" font-size="16.6" fill="#8CC84B" font-weight="700" textLength="172.05" lengthAdjust="spacingAndGlyphs">Business Performance</text>
<text x="371.28" y="234.3" font-size="16.6" fill="#8CC84B" font-weight="700" textLength="162.05" lengthAdjust="spacingAndGlyphs">Planning COMPLETE</text>
<text x="397.48" y="257" font-size="16.6" fill="#8CC84B" font-weight="700" textLength="110.05" lengthAdjust="spacingAndGlyphs">Mon 08.11.21</text>
<text x="1388.79" y="213.5" font-size="16.6" fill="#0F6FC6" font-weight="700" textLength="152.64" lengthAdjust="spacingAndGlyphs">Training/Readiness</text>
<text x="1365.38" y="235.5" font-size="16.6" fill="#0F6FC6" font-weight="700" textLength="200.15" lengthAdjust="spacingAndGlyphs">Development COMPLETE</text>
<text x="1416.88" y="258.7" font-size="16.6" fill="#0F6FC6" font-weight="700" textLength="95.95" lengthAdjust="spacingAndGlyphs">Fri 07.01.22</text>
<text x="1717.59" y="202.8" font-size="16.6" fill="#7030A0" font-weight="700" textLength="140.95" lengthAdjust="spacingAndGlyphs">Customer Service</text>
<text x="1695.88" y="224.7" font-size="16.6" fill="#7030A0" font-weight="700" textLength="183.75" lengthAdjust="spacingAndGlyphs">Program Development</text>
<text x="1743.79" y="247" font-size="16.6" fill="#7030A0" font-weight="700" textLength="88.04" lengthAdjust="spacingAndGlyphs">COMPLETE</text>
<text x="1731.59" y="269.8" font-size="16.6" fill="#7030A0" font-weight="700" textLength="112.25" lengthAdjust="spacingAndGlyphs">Wed 26.01.22</text>
<path d="M9.39 -17.66 L40.66 -1.03 Q42.6 0 40.66 1.03 L9.39 17.66 A20 20 0 1 1 9.39 -17.66 Z" fill="#FA4343" filter="url(#ds)" transform="translate(146 218) rotate(0)"/>
<path d="M9.39 -17.66 L40.66 -1.03 Q42.6 0 40.66 1.03 L9.39 17.66 A20 20 0 1 1 9.39 -17.66 Z" fill="#FA4343" filter="url(#ds)" transform="translate(589.4 195.2) rotate(160)"/>
<path d="M9.39 -17.66 L40.66 -1.03 Q42.6 0 40.66 1.03 L9.39 17.66 A20 20 0 1 1 9.39 -17.66 Z" fill="#FA4343" filter="url(#ds)" transform="translate(1324.5 227) rotate(0)"/>
<path d="M9.39 -17.66 L40.66 -1.03 Q42.6 0 40.66 1.03 L9.39 17.66 A20 20 0 1 1 9.39 -17.66 Z" fill="#FA4343" filter="url(#ds)" transform="translate(1649.5 219.2) rotate(0)"/>
<text x="150" y="225.8" font-size="21.5" fill="#fff" text-anchor="middle" stroke="#fff" stroke-width="0.2">1</text>
<text x="585" y="204.7" font-size="21.5" fill="#fff" text-anchor="middle" stroke="#fff" stroke-width="0.2">2</text>
<text x="1328" y="234.8" font-size="21.5" fill="#fff" text-anchor="middle" stroke="#fff" stroke-width="0.2">3</text>
<text x="1652.8" y="227" font-size="21.5" fill="#fff" text-anchor="middle" stroke="#fff" stroke-width="0.2">4</text>
</g>
<g id="grid">
<rect x="0" y="471" width="1911" height="5" fill="#E6E6E6"/>
<rect x="0" y="471" width="1911" height="1" fill="#C0C0C0"/>
<rect x="0" y="475" width="1893" height="1" fill="#C0C0C0"/>
<rect x="0" y="476" width="24" height="548" fill="#E6E6E6"/>
<rect x="24" y="476" width="815" height="45" fill="#E6E6E6"/>
<rect x="198" y="476" width="195" height="45" fill="#D2D2D2"/>
<rect x="72" y="521" width="767" height="461" fill="#fff"/>
<rect x="24" y="521" width="47" height="461" fill="#E6E6E6"/>
<rect x="24" y="961" width="47" height="21" fill="#D2D2D2"/>
<rect x="71" y="477" width="1" height="43" fill="#CFCFCF"/>
<rect x="122" y="477" width="1" height="43" fill="#CFCFCF"/>
<rect x="197" y="477" width="1" height="43" fill="#CFCFCF"/>
<rect x="392" y="477" width="1" height="43" fill="#CFCFCF"/>
<rect x="499" y="477" width="1" height="43" fill="#CFCFCF"/>
<rect x="606" y="477" width="1" height="43" fill="#CFCFCF"/>
<rect x="713" y="477" width="1" height="43" fill="#CFCFCF"/>
<rect x="72" y="520" width="767" height="1" fill="#9A9A9A"/>
<rect x="24" y="520" width="47" height="1" fill="#C8C8C8"/>
<rect x="198" y="519" width="195" height="2" fill="#2E7D32"/>
<rect x="122" y="521" width="1" height="461" fill="#DADADA"/>
<rect x="197" y="521" width="1" height="461" fill="#DADADA"/>
<rect x="392" y="521" width="1" height="461" fill="#DADADA"/>
<rect x="499" y="521" width="1" height="461" fill="#DADADA"/>
<rect x="606" y="521" width="1" height="461" fill="#DADADA"/>
<rect x="713" y="521" width="1" height="461" fill="#DADADA"/>
<rect x="72" y="572" width="767" height="1" fill="#DADADA"/>
<rect x="24" y="572" width="47" height="1" fill="#D0D0D0"/>
<rect x="72" y="666" width="767" height="1" fill="#DADADA"/>
<rect x="24" y="666" width="47" height="1" fill="#D0D0D0"/>
<rect x="72" y="694" width="767" height="1" fill="#DADADA"/>
<rect x="24" y="694" width="47" height="1" fill="#D0D0D0"/>
<rect x="72" y="722" width="767" height="1" fill="#DADADA"/>
<rect x="24" y="722" width="47" height="1" fill="#D0D0D0"/>
<rect x="72" y="793" width="767" height="1" fill="#DADADA"/>
<rect x="24" y="793" width="47" height="1" fill="#D0D0D0"/>
<rect x="72" y="864" width="767" height="1" fill="#DADADA"/>
<rect x="24" y="864" width="47" height="1" fill="#D0D0D0"/>
<rect x="72" y="912" width="767" height="1" fill="#DADADA"/>
<rect x="24" y="912" width="47" height="1" fill="#D0D0D0"/>
<rect x="72" y="960" width="767" height="1" fill="#DADADA"/>
<rect x="24" y="960" width="47" height="1" fill="#D0D0D0"/>
<rect x="71" y="521" width="1" height="461" fill="#9A9A9A"/>
<text transform="translate(14.7 795.8) rotate(-90)" font-size="17.4" fill="#2E7D32" stroke="#2E7D32" stroke-width="0.5" textLength="113" lengthAdjust="spacingAndGlyphs">GANTT CHART</text>
<circle cx="97" cy="503" r="9" fill="#3C74B8"/>
<rect x="96" y="501.5" width="2.2" height="6.5" fill="#fff"/>
<circle cx="97.1" cy="498.4" r="1.4" fill="#fff"/>
<text x="128.33" y="495.7" font-size="14.6" fill="#6A6A6A" textLength="29.4" lengthAdjust="spacingAndGlyphs">Task</text>
<text x="128.33" y="515.6" font-size="14.6" fill="#6A6A6A" textLength="38.9" lengthAdjust="spacingAndGlyphs">Mode</text>
<path d="M181.7 508.1 h8.6 l-4.3 4.6 z" fill="#555"/>
<text x="202.83" y="512.8" font-size="14.6" fill="#2E7D32" font-weight="700" textLength="78.59" lengthAdjust="spacingAndGlyphs">Task Name</text>
<path d="M376.9 508.1 h8.6 l-4.3 4.6 z" fill="#2E7D32"/>
<text x="397.03" y="512.8" font-size="14.6" fill="#6A6A6A" textLength="59.2" lengthAdjust="spacingAndGlyphs">Duration</text>
<path d="M483.7 508.1 h8.6 l-4.3 4.6 z" fill="#555"/>
<text x="504.13" y="512.8" font-size="14.6" fill="#6A6A6A" textLength="32.09" lengthAdjust="spacingAndGlyphs">Start</text>
<path d="M590.7 508.1 h8.6 l-4.3 4.6 z" fill="#555"/>
<text x="611.63" y="512.8" font-size="14.6" fill="#6A6A6A" textLength="37.59" lengthAdjust="spacingAndGlyphs">Finish</text>
<path d="M697.7 508.1 h8.6 l-4.3 4.6 z" fill="#555"/>
<text x="718.63" y="512.8" font-size="14.6" fill="#6A6A6A" textLength="85.89" lengthAdjust="spacingAndGlyphs">Predecessors</text>
<rect x="836.6" y="507.8" width="1.6" height="1.6" fill="#444"/>
<text x="43.73" y="537.8" font-size="14.6" fill="#6E6E6E" textLength="8.5" lengthAdjust="spacingAndGlyphs">0</text>
<text x="43.73" y="589.8" font-size="14.6" fill="#6E6E6E" textLength="8.5" lengthAdjust="spacingAndGlyphs">1</text>
<text x="43.73" y="683.8" font-size="14.6" fill="#6E6E6E" textLength="8.5" lengthAdjust="spacingAndGlyphs">2</text>
<text x="39.83" y="711.8" font-size="14.6" fill="#6E6E6E" textLength="16.3" lengthAdjust="spacingAndGlyphs">10</text>
<text x="39.83" y="739.8" font-size="14.6" fill="#6E6E6E" textLength="16.3" lengthAdjust="spacingAndGlyphs">24</text>
<text x="39.83" y="810.8" font-size="14.6" fill="#6E6E6E" textLength="16.3" lengthAdjust="spacingAndGlyphs">78</text>
<text x="39.83" y="881.8" font-size="14.6" fill="#6E6E6E" textLength="16.3" lengthAdjust="spacingAndGlyphs">83</text>
<text x="35.63" y="929.8" font-size="14.6" fill="#6E6E6E" textLength="24.69" lengthAdjust="spacingAndGlyphs">118</text>
<text x="35.63" y="977.8" font-size="14.6" fill="#2E7D32" font-weight="700" textLength="26.19" lengthAdjust="spacingAndGlyphs">127</text>
<rect x="127" y="526" width="17" height="8" fill="#4A7EBB" rx="1.2"/>
<path d="M138 533.9 h3.8 v-2.35 l3.9 3.6 l-3.9 3.6 v-2.35 h-3.8 z" fill="#6E6E6E" stroke="#fff" stroke-width="1.6" paint-order="stroke"/>
<rect x="127" y="578" width="17" height="8" fill="#4A7EBB" rx="1.2"/>
<path d="M138 585.9 h3.8 v-2.35 l3.9 3.6 l-3.9 3.6 v-2.35 h-3.8 z" fill="#6E6E6E" stroke="#fff" stroke-width="1.6" paint-order="stroke"/>
<rect x="127" y="672" width="17" height="8" fill="#4A7EBB" rx="1.2"/>
<path d="M138 679.9 h3.8 v-2.35 l3.9 3.6 l-3.9 3.6 v-2.35 h-3.8 z" fill="#6E6E6E" stroke="#fff" stroke-width="1.6" paint-order="stroke"/>
<rect x="127" y="700" width="17" height="8" fill="#4A7EBB" rx="1.2"/>
<path d="M138 707.9 h3.8 v-2.35 l3.9 3.6 l-3.9 3.6 v-2.35 h-3.8 z" fill="#6E6E6E" stroke="#fff" stroke-width="1.6" paint-order="stroke"/>
<rect x="127" y="728" width="17" height="8" fill="#4A7EBB" rx="1.2"/>
<path d="M138 735.9 h3.8 v-2.35 l3.9 3.6 l-3.9 3.6 v-2.35 h-3.8 z" fill="#6E6E6E" stroke="#fff" stroke-width="1.6" paint-order="stroke"/>
<rect x="127" y="799" width="17" height="8" fill="#4A7EBB" rx="1.2"/>
<path d="M138 806.9 h3.8 v-2.35 l3.9 3.6 l-3.9 3.6 v-2.35 h-3.8 z" fill="#6E6E6E" stroke="#fff" stroke-width="1.6" paint-order="stroke"/>
<rect x="127" y="870" width="17" height="8" fill="#4A7EBB" rx="1.2"/>
<path d="M138 877.9 h3.8 v-2.35 l3.9 3.6 l-3.9 3.6 v-2.35 h-3.8 z" fill="#6E6E6E" stroke="#fff" stroke-width="1.6" paint-order="stroke"/>
<rect x="127" y="918" width="17" height="8" fill="#4A7EBB" rx="1.2"/>
<path d="M138 925.9 h3.8 v-2.35 l3.9 3.6 l-3.9 3.6 v-2.35 h-3.8 z" fill="#6E6E6E" stroke="#fff" stroke-width="1.6" paint-order="stroke"/>
<rect x="127" y="966" width="17" height="8" fill="#4A7EBB" rx="1.2"/>
<path d="M138 973.9 h3.8 v-2.35 l3.9 3.6 l-3.9 3.6 v-2.35 h-3.8 z" fill="#6E6E6E" stroke="#fff" stroke-width="1.6" paint-order="stroke"/>
<path d="M75 575 h18 v18 h-11.6 v-6.6 h-6.4 z" fill="#E9C57F"/>
<path d="M75.2 587.4 h5.2 v5.2 z" fill="#E9C57F"/>
<path d="M208 532.2 v5 h-6 z" fill="#333"/>
<text x="213.77" y="540.8" font-size="17" fill="#000" font-weight="700" textLength="144.68" lengthAdjust="spacingAndGlyphs">Customer Service</text>
<text x="213.77" y="564.5" font-size="17" fill="#000" font-weight="700" textLength="77.47" lengthAdjust="spacingAndGlyphs">Ramp Up</text>
<text x="394.77" y="540.8" font-size="17" fill="#000" font-weight="700" textLength="87.68" lengthAdjust="spacingAndGlyphs">68,5 days?</text>
<text x="501.88" y="540.8" font-size="17" fill="#000" font-weight="700" textLength="96.08" lengthAdjust="spacingAndGlyphs">Fri 22.10.21</text>
<text x="608.78" y="540.8" font-size="17" fill="#000" font-weight="700" textLength="39.77" lengthAdjust="spacingAndGlyphs">Wed</text>
<text x="608.78" y="564.5" font-size="17" fill="#000" font-weight="700" textLength="70.97" lengthAdjust="spacingAndGlyphs">26.01.22</text>
<text x="230.04" y="590.8" font-size="14.5" fill="#1A1A1A" textLength="151.59" lengthAdjust="spacingAndGlyphs">Read the note for an</text>
<text x="230.04" y="612.85" font-size="14.5" fill="#1A1A1A" textLength="134.49" lengthAdjust="spacingAndGlyphs">explanation of the</text>
<text x="230.04" y="634.9" font-size="14.5" fill="#1A1A1A" textLength="107.49" lengthAdjust="spacingAndGlyphs">purpose of the</text>
<text x="230.04" y="656.95" font-size="14.5" fill="#1A1A1A" textLength="66.09" lengthAdjust="spacingAndGlyphs">template</text>
<text x="394.84" y="590.8" font-size="14.5" fill="#1A1A1A" textLength="46.59" lengthAdjust="spacingAndGlyphs">0 days</text>
<text x="501.94" y="590.8" font-size="14.5" fill="#1A1A1A" textLength="85.79" lengthAdjust="spacingAndGlyphs">Fri 22.10.21</text>
<text x="608.84" y="590.8" font-size="14.5" fill="#1A1A1A" textLength="85.89" lengthAdjust="spacingAndGlyphs">Fri 22.10.21</text>
<path d="M219.4 675.8 l4.4 3.7 l-4.4 3.7 z" fill="#fff" stroke="#7A7A7A" stroke-width="0.9"/>
<text x="229.84" y="684.8" font-size="14.5" fill="#000" font-weight="700" textLength="134.89" lengthAdjust="spacingAndGlyphs">Initial Assessment</text>
<text x="394.84" y="684.8" font-size="14.5" fill="#000" font-weight="700" textLength="56.29" lengthAdjust="spacingAndGlyphs">5 days?</text>
<text x="501.94" y="684.8" font-size="14.5" fill="#000" font-weight="700" textLength="85.79" lengthAdjust="spacingAndGlyphs">Fri 22.10.21</text>
<text x="608.84" y="684.8" font-size="14.5" fill="#000" font-weight="700" textLength="97.59" lengthAdjust="spacingAndGlyphs">Thu 28.10.21</text>
<path d="M219.4 703.8 l4.4 3.7 l-4.4 3.7 z" fill="#fff" stroke="#7A7A7A" stroke-width="0.9"/>
<text x="229.84" y="712.8" font-size="14.5" fill="#000" font-weight="700" textLength="124.19" lengthAdjust="spacingAndGlyphs">Service Planning</text>
<text x="394.84" y="712.8" font-size="14.5" fill="#000" font-weight="700" textLength="56.29" lengthAdjust="spacingAndGlyphs">5 days?</text>
<text x="501.94" y="712.8" font-size="14.5" fill="#000" font-weight="700" textLength="85.79" lengthAdjust="spacingAndGlyphs">Fri 29.10.21</text>
<text x="608.84" y="712.8" font-size="14.5" fill="#000" font-weight="700" textLength="97.59" lengthAdjust="spacingAndGlyphs">Thu 04.11.21</text>
<path d="M219.4 731.8 l4.4 3.7 l-4.4 3.7 z" fill="#fff" stroke="#7A7A7A" stroke-width="0.9"/>
<text x="229.84" y="740.8" font-size="14.5" fill="#000" font-weight="700" textLength="119.19" lengthAdjust="spacingAndGlyphs">Service Delivery</text>
<text x="229.84" y="762.8" font-size="14.5" fill="#000" font-weight="700" textLength="104.79" lengthAdjust="spacingAndGlyphs">Infrastructure</text>
<text x="229.84" y="784.8" font-size="14.5" fill="#000" font-weight="700" textLength="66.29" lengthAdjust="spacingAndGlyphs">Planning</text>
<text x="394.84" y="740.8" font-size="14.5" fill="#000" font-weight="700" textLength="79.09" lengthAdjust="spacingAndGlyphs">34,5 days?</text>
<text x="501.94" y="740.8" font-size="14.5" fill="#000" font-weight="700" textLength="85.79" lengthAdjust="spacingAndGlyphs">Fri 29.10.21</text>
<text x="608.84" y="740.8" font-size="14.5" fill="#000" font-weight="700" textLength="97.59" lengthAdjust="spacingAndGlyphs">Thu 16.12.21</text>
<path d="M219.4 802.8 l4.4 3.7 l-4.4 3.7 z" fill="#fff" stroke="#7A7A7A" stroke-width="0.9"/>
<text x="229.84" y="811.8" font-size="14.5" fill="#000" font-weight="700" textLength="64.59" lengthAdjust="spacingAndGlyphs">Business</text>
<text x="229.84" y="833.8" font-size="14.5" fill="#000" font-weight="700" textLength="98.39" lengthAdjust="spacingAndGlyphs">Performance</text>
<text x="229.84" y="855.8" font-size="14.5" fill="#000" font-weight="700" textLength="66.29" lengthAdjust="spacingAndGlyphs">Planning</text>
<text x="394.84" y="811.8" font-size="14.5" fill="#000" font-weight="700" textLength="56.29" lengthAdjust="spacingAndGlyphs">3 days?</text>
<text x="501.94" y="811.8" font-size="14.5" fill="#000" font-weight="700" textLength="97.29" lengthAdjust="spacingAndGlyphs">Thu 04.11.21</text>
<text x="608.84" y="811.8" font-size="14.5" fill="#000" font-weight="700" textLength="36.29" lengthAdjust="spacingAndGlyphs">Mon</text>
<text x="608.84" y="833.8" font-size="14.5" fill="#000" font-weight="700" textLength="64.09" lengthAdjust="spacingAndGlyphs">08.11.21</text>
<path d="M219.4 873.8 l4.4 3.7 l-4.4 3.7 z" fill="#fff" stroke="#7A7A7A" stroke-width="0.9"/>
<text x="229.84" y="882.8" font-size="14.5" fill="#000" font-weight="700" textLength="115.89" lengthAdjust="spacingAndGlyphs">Build Customer</text>
<text x="229.84" y="904.8" font-size="14.5" fill="#000" font-weight="700" textLength="123.49" lengthAdjust="spacingAndGlyphs">Service Program</text>
<text x="394.84" y="882.8" font-size="14.5" fill="#000" font-weight="700" textLength="79.09" lengthAdjust="spacingAndGlyphs">43,5 days?</text>
<text x="501.94" y="882.8" font-size="14.5" fill="#000" font-weight="700" textLength="96.29" lengthAdjust="spacingAndGlyphs">Tue 09.11.21</text>
<text x="608.84" y="882.8" font-size="14.5" fill="#000" font-weight="700" textLength="86.49" lengthAdjust="spacingAndGlyphs">Fri 07.01.22</text>
<path d="M219.4 921.8 l4.4 3.7 l-4.4 3.7 z" fill="#fff" stroke="#7A7A7A" stroke-width="0.9"/>
<text x="229.84" y="930.8" font-size="14.5" fill="#000" font-weight="700" textLength="65.59" lengthAdjust="spacingAndGlyphs">Program</text>
<text x="229.84" y="952.8" font-size="14.5" fill="#000" font-weight="700" textLength="94.09" lengthAdjust="spacingAndGlyphs">Deployment</text>
<text x="394.84" y="930.8" font-size="14.5" fill="#000" font-weight="700" textLength="79.09" lengthAdjust="spacingAndGlyphs">45,5 days?</text>
<text x="501.94" y="930.8" font-size="14.5" fill="#000" font-weight="700" textLength="97.29" lengthAdjust="spacingAndGlyphs">Thu 11.11.21</text>
<text x="608.84" y="930.8" font-size="14.5" fill="#000" font-weight="700" textLength="97.59" lengthAdjust="spacingAndGlyphs">Thu 13.01.22</text>
<path d="M219.4 969.8 l4.4 3.7 l-4.4 3.7 z" fill="#fff" stroke="#7A7A7A" stroke-width="0.9"/>
<text x="229.84" y="978.8" font-size="14.5" fill="#000" font-weight="700" textLength="92.39" lengthAdjust="spacingAndGlyphs">Post Launch</text>
<text x="394.84" y="978.8" font-size="14.5" fill="#000" font-weight="700" textLength="56.29" lengthAdjust="spacingAndGlyphs">9 days?</text>
<text x="501.94" y="978.8" font-size="14.5" fill="#000" font-weight="700" textLength="97.29" lengthAdjust="spacingAndGlyphs">Thu 13.01.22</text>
<text x="608.84" y="978.8" font-size="14.5" fill="#000" font-weight="700" textLength="103.29" lengthAdjust="spacingAndGlyphs">Wed 26.01.22</text>
<rect x="72" y="960" width="767" height="1" fill="#6A6A6A"/>
<rect x="197.5" y="960.5" width="196" height="24" fill="none" stroke="#26752A" stroke-width="2"/>
<rect x="71" y="961" width="2" height="21" fill="#26752A"/>
<rect x="839" y="476" width="4" height="527" fill="#E6E6E6"/>
<rect x="838" y="476" width="1" height="527" fill="#ABABAB"/>
<rect x="842" y="476" width="1" height="527" fill="#ABABAB"/>
</g>
<g id="gantt">
<rect x="844" y="476" width="1049" height="45" fill="#E6E6E6"/>
<rect x="844" y="521" width="1049" height="461" fill="#fff"/>
<rect x="844" y="520" width="1049" height="1" fill="#ABABAB"/>
<rect x="881" y="503" width="1" height="17" fill="#C9C9C9"/>
<rect x="920" y="503" width="1" height="17" fill="#C9C9C9"/>
<rect x="959" y="503" width="1" height="17" fill="#C9C9C9"/>
<rect x="998" y="503" width="1" height="17" fill="#C9C9C9"/>
<rect x="1037" y="503" width="1" height="17" fill="#C9C9C9"/>
<rect x="1076" y="503" width="1" height="17" fill="#C9C9C9"/>
<rect x="1115" y="503" width="1" height="17" fill="#C9C9C9"/>
<rect x="1154" y="503" width="1" height="17" fill="#C9C9C9"/>
<rect x="1193" y="503" width="1" height="17" fill="#C9C9C9"/>
<rect x="1232" y="503" width="1" height="17" fill="#C9C9C9"/>
<rect x="1271" y="503" width="1" height="17" fill="#C9C9C9"/>
<rect x="1310" y="503" width="1" height="17" fill="#C9C9C9"/>
<rect x="1349" y="503" width="1" height="17" fill="#C9C9C9"/>
<rect x="1388" y="503" width="1" height="17" fill="#C9C9C9"/>
<rect x="1427" y="503" width="1" height="17" fill="#C9C9C9"/>
<rect x="1466" y="503" width="1" height="17" fill="#C9C9C9"/>
<rect x="1505" y="503" width="1" height="17" fill="#C9C9C9"/>
<rect x="1544" y="503" width="1" height="17" fill="#C9C9C9"/>
<rect x="1583" y="503" width="1" height="17" fill="#C9C9C9"/>
<rect x="1622" y="503" width="1" height="17" fill="#C9C9C9"/>
<rect x="1661" y="503" width="1" height="17" fill="#C9C9C9"/>
<rect x="1700" y="503" width="1" height="17" fill="#C9C9C9"/>
<rect x="1739" y="503" width="1" height="17" fill="#C9C9C9"/>
<rect x="1778" y="503" width="1" height="17" fill="#C9C9C9"/>
<rect x="1817" y="503" width="1" height="17" fill="#C9C9C9"/>
<rect x="1856" y="503" width="1" height="17" fill="#C9C9C9"/>
<rect x="1030" y="480" width="1" height="14" fill="#C9C9C9"/>
<rect x="1264" y="480" width="1" height="14" fill="#C9C9C9"/>
<rect x="1505" y="480" width="1" height="14" fill="#C9C9C9"/>
<rect x="1747" y="480" width="1" height="14" fill="#C9C9C9"/>
<text x="854.99" y="512" font-size="12.4" fill="#6A6A6A" textLength="13.93" lengthAdjust="spacingAndGlyphs">08</text>
<text x="893.99" y="512" font-size="12.4" fill="#6A6A6A" textLength="13.93" lengthAdjust="spacingAndGlyphs">13</text>
<text x="932.99" y="512" font-size="12.4" fill="#6A6A6A" textLength="13.93" lengthAdjust="spacingAndGlyphs">18</text>
<text x="971.99" y="512" font-size="12.4" fill="#6A6A6A" textLength="13.93" lengthAdjust="spacingAndGlyphs">23</text>
<text x="1010.99" y="512" font-size="12.4" fill="#6A6A6A" textLength="13.93" lengthAdjust="spacingAndGlyphs">28</text>
<text x="1049.99" y="512" font-size="12.4" fill="#6A6A6A" textLength="13.93" lengthAdjust="spacingAndGlyphs">02</text>
<text x="1088.99" y="512" font-size="12.4" fill="#6A6A6A" textLength="13.93" lengthAdjust="spacingAndGlyphs">07</text>
<text x="1127.99" y="512" font-size="12.4" fill="#6A6A6A" textLength="13.93" lengthAdjust="spacingAndGlyphs">12</text>
<text x="1166.99" y="512" font-size="12.4" fill="#6A6A6A" textLength="13.93" lengthAdjust="spacingAndGlyphs">17</text>
<text x="1205.99" y="512" font-size="12.4" fill="#6A6A6A" textLength="13.93" lengthAdjust="spacingAndGlyphs">22</text>
<text x="1244.99" y="512" font-size="12.4" fill="#6A6A6A" textLength="13.93" lengthAdjust="spacingAndGlyphs">27</text>
<text x="1283.99" y="512" font-size="12.4" fill="#6A6A6A" textLength="13.93" lengthAdjust="spacingAndGlyphs">02</text>
<text x="1322.99" y="512" font-size="12.4" fill="#6A6A6A" textLength="13.93" lengthAdjust="spacingAndGlyphs">07</text>
<text x="1361.99" y="512" font-size="12.4" fill="#6A6A6A" textLength="13.93" lengthAdjust="spacingAndGlyphs">12</text>
<text x="1400.99" y="512" font-size="12.4" fill="#6A6A6A" textLength="13.93" lengthAdjust="spacingAndGlyphs">17</text>
<text x="1439.99" y="512" font-size="12.4" fill="#6A6A6A" textLength="13.93" lengthAdjust="spacingAndGlyphs">22</text>
<text x="1478.99" y="512" font-size="12.4" fill="#6A6A6A" textLength="13.93" lengthAdjust="spacingAndGlyphs">27</text>
<text x="1517.99" y="512" font-size="12.4" fill="#6A6A6A" textLength="13.93" lengthAdjust="spacingAndGlyphs">01</text>
<text x="1556.99" y="512" font-size="12.4" fill="#6A6A6A" textLength="13.93" lengthAdjust="spacingAndGlyphs">06</text>
<text x="1595.99" y="512" font-size="12.4" fill="#6A6A6A" textLength="13.93" lengthAdjust="spacingAndGlyphs">11</text>
<text x="1634.99" y="512" font-size="12.4" fill="#6A6A6A" textLength="13.93" lengthAdjust="spacingAndGlyphs">16</text>
<text x="1673.99" y="512" font-size="12.4" fill="#6A6A6A" textLength="13.93" lengthAdjust="spacingAndGlyphs">21</text>
<text x="1712.99" y="512" font-size="12.4" fill="#6A6A6A" textLength="13.93" lengthAdjust="spacingAndGlyphs">26</text>
<text x="1751.99" y="512" font-size="12.4" fill="#6A6A6A" textLength="13.93" lengthAdjust="spacingAndGlyphs">31</text>
<text x="1790.99" y="512" font-size="12.4" fill="#6A6A6A" textLength="13.93" lengthAdjust="spacingAndGlyphs">05</text>
<text x="1829.99" y="512" font-size="12.4" fill="#6A6A6A" textLength="13.93" lengthAdjust="spacingAndGlyphs">10</text>
<text x="1868.99" y="512" font-size="12.4" fill="#6A6A6A" textLength="13.93" lengthAdjust="spacingAndGlyphs">15</text>
<text x="845.99" y="491.8" font-size="12.4" fill="#6A6A6A" textLength="28.13" lengthAdjust="spacingAndGlyphs">2021</text>
<text x="1035.89" y="491.8" font-size="12.4" fill="#6A6A6A" textLength="94.03" lengthAdjust="spacingAndGlyphs">November 2021</text>
<text x="1269.69" y="491.8" font-size="12.4" fill="#6A6A6A" textLength="91.93" lengthAdjust="spacingAndGlyphs">December 2021</text>
<text x="1511.09" y="491.8" font-size="12.4" fill="#6A6A6A" textLength="76.53" lengthAdjust="spacingAndGlyphs">January 2022</text>
<text x="1752.89" y="491.8" font-size="12.4" fill="#6A6A6A" textLength="83.13" lengthAdjust="spacingAndGlyphs">February 2022</text>
<path d="M1708.5 521 V982" stroke="#8A8A8A" stroke-width="1" stroke-dasharray="1 3" fill="none"/>
<rect x="951" y="529" width="755" height="2" fill="#ABABAB"/>
<rect x="951" y="529" width="3" height="11" fill="#ABABAB"/>
<rect x="1703" y="529" width="3" height="11" fill="#ABABAB"/>
<path d="M952.5 581.4 l5.4 5.2 l-5.4 5.2 l-5.4 -5.2 z" fill="#555"/>
<text x="964.79" y="588" font-size="16.6" fill="#000" font-weight="700" textLength="45.64" lengthAdjust="spacingAndGlyphs">22.10</text>
<rect x="951" y="675" width="57" height="2" fill="#4E4E4E"/>
<rect x="951" y="675" width="3" height="11" fill="#4E4E4E"/>
<rect x="1005" y="675" width="3" height="11" fill="#4E4E4E"/>
<rect x="1005" y="703" width="58" height="2" fill="#4E4E4E"/>
<rect x="1005" y="703" width="3" height="11" fill="#4E4E4E"/>
<rect x="1060" y="703" width="3" height="11" fill="#4E4E4E"/>
<rect x="1005" y="731" width="381" height="2" fill="#4E4E4E"/>
<rect x="1005" y="731" width="3" height="11" fill="#4E4E4E"/>
<rect x="1383" y="731" width="3" height="11" fill="#4E4E4E"/>
<rect x="1052" y="802" width="42" height="2" fill="#4E4E4E"/>
<rect x="1052" y="802" width="3" height="11" fill="#4E4E4E"/>
<rect x="1091" y="802" width="3" height="11" fill="#4E4E4E"/>
<rect x="1091" y="873" width="467" height="2" fill="#4E4E4E"/>
<rect x="1091" y="873" width="3" height="11" fill="#4E4E4E"/>
<rect x="1555" y="873" width="3" height="11" fill="#4E4E4E"/>
<rect x="1107" y="921" width="498" height="2" fill="#4E4E4E"/>
<rect x="1107" y="921" width="3" height="11" fill="#4E4E4E"/>
<rect x="1602" y="921" width="3" height="11" fill="#4E4E4E"/>
<rect x="1602" y="969" width="104" height="2" fill="#4E4E4E"/>
<rect x="1602" y="969" width="3" height="11" fill="#4E4E4E"/>
<rect x="1703" y="969" width="3" height="11" fill="#4E4E4E"/>
<rect x="952" y="521" width="1" height="461" fill="#8FCC8F"/>
<rect x="844" y="960" width="1049" height="1" fill="#7A7A7A"/>
<rect x="1893" y="476" width="18" height="527" fill="#F0F0F0"/>
<rect x="1893.5" y="478.5" width="18" height="265" fill="#fff" stroke="#ABABAB" stroke-width="1"/>
<rect x="1894" y="497" width="17" height="1" fill="#ABABAB"/>
<path d="M1898 490 h8.6 l-4.3 -4.4 z" fill="#606060"/>
<rect x="1893.5" y="962.5" width="18" height="18" fill="#fff" stroke="#ABABAB" stroke-width="1"/>
<path d="M1898 969.6 h8.6 l-4.3 4.4 z" fill="#606060"/>
</g>
<g id="scroll">
<rect x="24" y="982" width="1887" height="21" fill="#F0F0F0"/>
<rect x="27" y="983.5" width="17.5" height="18" fill="#fff" stroke="#ABABAB" stroke-width="1"/>
<path d="M33.15 992.5 l4.6 -4.4 v8.8 z" fill="#606060"/>
<rect x="45.5" y="983.5" width="524" height="18" fill="#fff" stroke="#ABABAB" stroke-width="1"/>
<rect x="817.5" y="983.5" width="17.5" height="18" fill="#fff" stroke="#ABABAB" stroke-width="1"/>
<path d="M828.85 992.5 l-4.6 -4.4 v8.8 z" fill="#606060"/>
<rect x="845.5" y="983.5" width="17.5" height="18" fill="#fff" stroke="#ABABAB" stroke-width="1"/>
<path d="M851.65 992.5 l4.6 -4.4 v8.8 z" fill="#606060"/>
<rect x="939.5" y="983.5" width="502" height="18" fill="#fff" stroke="#ABABAB" stroke-width="1"/>
<rect x="1872.5" y="983.5" width="17.5" height="18" fill="#fff" stroke="#ABABAB" stroke-width="1"/>
<path d="M1883.85 992.5 l-4.6 -4.4 v8.8 z" fill="#606060"/>
</g>
<g id="status">
<rect x="0" y="1003" width="1911" height="21" fill="#F3F3F3"/>
<rect x="0" y="1003" width="1911" height="1" fill="#D4D4D4"/>
<text x="2.98" y="1022" font-size="12.6" fill="#444" textLength="36.45" lengthAdjust="spacingAndGlyphs">Ready</text>
<rect x="81" y="1011" width="17" height="8" fill="#555" rx="1"/>
<path d="M92 1018.4 h3.8 v-2.4 l3.8 3.5 l-3.8 3.5 v-2.4 h-3.8 z" fill="#555" stroke="#F3F3F3" stroke-width="1.6" paint-order="stroke"/>
<text x="102.69" y="1022" font-size="12.6" fill="#444" textLength="164.94" lengthAdjust="spacingAndGlyphs">New Tasks : Auto Scheduled</text>
<rect x="1493" y="1004" width="50" height="20" fill="#C8C8C8"/>
<rect x="1509.8" y="1009.5" width="16" height="16" fill="none" stroke="#6A6A6A" stroke-width="1"/>
<rect x="1512" y="1012.5" width="6" height="1" fill="#6A6A6A"/>
<rect x="1514" y="1016" width="7" height="1" fill="#6A6A6A"/>
<rect x="1517" y="1019.5" width="7" height="1" fill="#6A6A6A"/>
<rect x="1519" y="1023" width="6" height="1" fill="#6A6A6A"/>
<rect x="1559.5" y="1009.5" width="16" height="16" fill="#fff" stroke="#6A6A6A" stroke-width="1"/>
<rect x="1559" y="1009" width="17" height="3.4" fill="#6A6A6A"/>
<rect x="1563.2" y="1012" width="1" height="12" fill="#6A6A6A"/>
<rect x="1567.4" y="1012" width="1" height="12" fill="#6A6A6A"/>
<rect x="1571.6" y="1012" width="1" height="12" fill="#6A6A6A"/>
<rect x="1559" y="1016.2" width="17" height="1" fill="#6A6A6A"/>
<rect x="1559" y="1020.4" width="17" height="1" fill="#6A6A6A"/>
<rect x="1559" y="1024.6" width="17" height="1" fill="#6A6A6A"/>
<rect x="1609.5" y="1009.5" width="16" height="16" fill="#fff" stroke="#6A6A6A" stroke-width="1"/>
<rect x="1618" y="1009" width="8" height="4.6" fill="#6A6A6A"/>
<rect x="1609" y="1015.6" width="9" height="4.6" fill="#6A6A6A"/>
<rect x="1609" y="1014.4" width="17" height="1" fill="#6A6A6A"/>
<rect x="1609" y="1020.6" width="17" height="1" fill="#6A6A6A"/>
<rect x="1617.6" y="1009" width="1" height="15" fill="#6A6A6A"/>
<rect x="1660.5" y="1009.5" width="15" height="16" fill="#fff" stroke="#6A6A6A" stroke-width="1"/>
<rect x="1665.2" y="1009" width="1" height="15" fill="#6A6A6A"/>
<rect x="1670.4" y="1009" width="1" height="15" fill="#6A6A6A"/>
<rect x="1660" y="1014.4" width="16" height="1" fill="#6A6A6A"/>
<rect x="1660" y="1019.8" width="16" height="1" fill="#6A6A6A"/>
<rect x="1712.5" y="1009.5" width="12" height="16" fill="#fff" stroke="#6A6A6A" stroke-width="1"/>
<rect x="1709" y="1014" width="7" height="1.4" fill="#6A6A6A"/>
<rect x="1709" y="1020" width="7" height="1.4" fill="#6A6A6A"/>
<rect x="1750" y="1016.3" width="10" height="1.1" fill="#444"/>
<rect x="1766" y="1016.6" width="125" height="1" fill="#555"/>
<rect x="1828" y="1013.6" width="1" height="7" fill="#555"/>
<rect x="1831.4" y="1009.8" width="5.6" height="15" fill="#666"/>
<rect x="1897" y="1016.3" width="9.4" height="1.1" fill="#444"/>
<rect x="1901.2" y="1011.6" width="1.1" height="9.4" fill="#444"/>
</g>
</svg>
</div>
</body>
</html>
